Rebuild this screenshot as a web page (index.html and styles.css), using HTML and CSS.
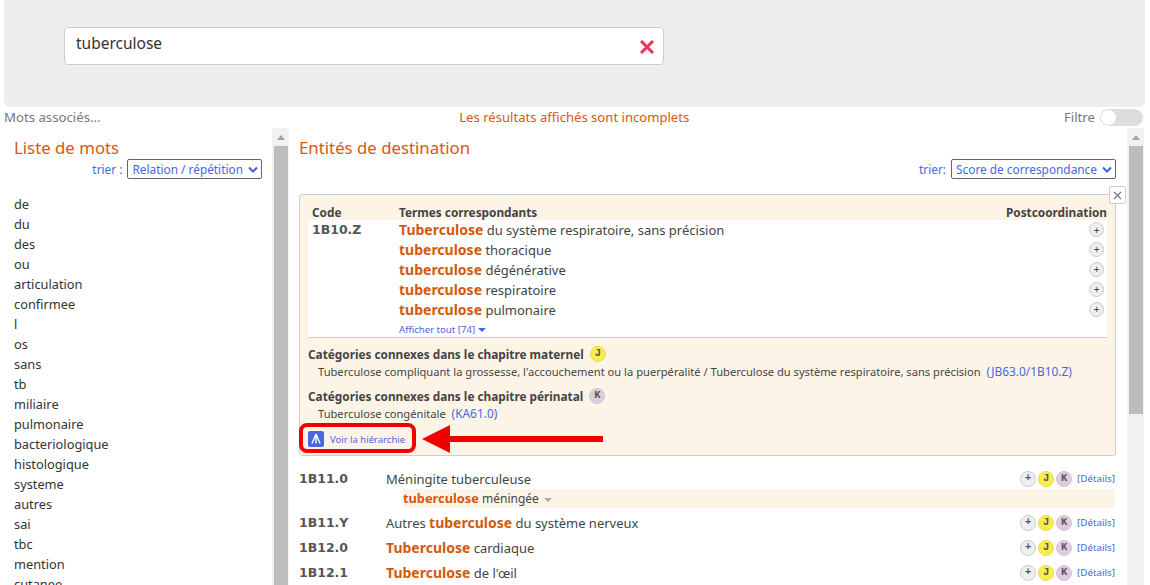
FILE: index.html
```html
<!DOCTYPE html>
<html lang="fr">
<head>
  <meta charset="UTF-8">
  <title>Recherche - tuberculose</title>
  <link rel="stylesheet" href="styles.css">
</head>
<body>
  <div class="search-band">
    <div class="search-box">
      <span class="search-text">tuberculose</span>
      <svg class="search-clear" width="16" height="14" viewBox="0 0 16 14"><path d="M2 1l12 12M14 1L2 13" stroke="#f0325f" stroke-width="3" fill="none"/></svg>
    </div>
  </div>

  <div class="status-row">
    <span class="status-left">Mots associés...</span>
    <span class="status-mid">Les résultats affichés sont incomplets</span>
    <span class="status-right">Filtre <span class="toggle"><span class="toggle-knob"></span></span></span>
  </div>

  <div class="panes">
    <div class="word-pane">
      <h2 class="pane-title">Liste de mots</h2>
      <div class="sort-row">
        <span>trier :</span>
        <span class="sort-select">Relation / répétition <svg width="10" height="7" viewBox="0 0 10 7"><path d="M1 1.5l4 4 4-4" stroke="#3f5fe0" stroke-width="2" fill="none"/></svg></span>
      </div>
      <ul class="word-list">
        <li>de</li><li>du</li><li>des</li><li>ou</li><li>articulation</li><li>confirmee</li><li>l</li><li>os</li><li>sans</li><li>tb</li><li>miliaire</li><li>pulmonaire</li><li>bacteriologique</li><li>histologique</li><li>systeme</li><li>autres</li><li>sai</li><li>tbc</li><li>mention</li><li>cutanee</li>
      </ul>
    </div>
    <div class="scrollbar">
      <span class="scroll-up"></span>
      <span class="scroll-thumb thumb-long"></span>
    </div>

    <div class="results-pane">
      <h2 class="pane-title">Entités de destination</h2>
      <div class="sort-row">
        <span>trier:</span>
        <span class="sort-select">Score de correspondance <svg width="10" height="7" viewBox="0 0 10 7"><path d="M1 1.5l4 4 4-4" stroke="#3f5fe0" stroke-width="2" fill="none"/></svg></span>
      </div>

      <div class="card">
        <span class="card-close">
          <svg width="9" height="9" viewBox="0 0 9 9"><path d="M1 1l7 7M8 1L1 8" stroke="#777" stroke-width="1.2" fill="none"/></svg>
        </span>
        <div class="card-head">
          <span class="col-code">Code</span>
          <span class="col-terms">Termes correspondants</span>
          <span class="col-post">Postcoordination</span>
        </div>
        <div class="card-table">
          <div class="term-row">
            <span class="col-code code">1B10.Z</span>
            <span class="col-terms"><b>Tuberculose</b> du système respiratoire, sans précision</span>
            <span class="plus">+</span>
          </div>
          <div class="term-row">
            <span class="col-code"></span>
            <span class="col-terms"><b>tuberculose</b> thoracique</span>
            <span class="plus">+</span>
          </div>
          <div class="term-row">
            <span class="col-code"></span>
            <span class="col-terms"><b>tuberculose</b> dégénérative</span>
            <span class="plus">+</span>
          </div>
          <div class="term-row">
            <span class="col-code"></span>
            <span class="col-terms"><b>tuberculose</b> respiratoire</span>
            <span class="plus">+</span>
          </div>
          <div class="term-row">
            <span class="col-code"></span>
            <span class="col-terms"><b>tuberculose</b> pulmonaire</span>
            <span class="plus">+</span>
          </div>
          <div class="show-all">Afficher tout [74] <i class="caret"></i></div>
        </div>

        <div class="related">
          <div class="related-title">Catégories connexes dans le chapitre maternel <span class="chip chip-j">J</span></div>
          <div class="related-line">Tuberculose compliquant la grossesse, l'accouchement ou la puerpéralité / Tuberculose du système respiratoire, sans précision <a>(JB63.0/1B10.Z)</a></div>
        </div>
        <div class="related">
          <div class="related-title">Catégories connexes dans le chapitre périnatal <span class="chip chip-k">K</span></div>
          <div class="related-line">Tuberculose congénitale <a>(KA61.0)</a></div>
        </div>

        <div class="hierarchy">
          <span class="hierarchy-icon">
            <svg width="16" height="16" viewBox="0 0 16 16"><path d="M8 3L4 12.5M8 3l4 9.5M8 5v7.5" stroke="#fff" stroke-width="1.4" fill="none"/></svg>
          </span>
          Voir la hiérarchie
        </div>
        <span class="hierarchy-ring"></span>
        <svg class="hierarchy-arrow" width="181" height="28" viewBox="0 0 181 28"><path d="M0 14L28 0v11H181v6H28v11z" fill="#f20000"/></svg>
      </div>

      <div class="result">
        <span class="result-code code">1B11.0</span>
        <span class="result-title">Méningite tuberculeuse</span>
        <span class="chips"><span class="chip chip-plus">+</span><span class="chip chip-j">J</span><span class="chip chip-k">K</span></span>
        <a class="details">[Détails]</a>
      </div>
      <div class="result-sub"><b>tuberculose</b> méningée <i class="caret caret-grey"></i></div>
      <div class="result">
        <span class="result-code code">1B11.Y</span>
        <span class="result-title">Autres <b>tuberculose</b> du système nerveux</span>
        <span class="chips"><span class="chip chip-plus">+</span><span class="chip chip-j">J</span><span class="chip chip-k">K</span></span>
        <a class="details">[Détails]</a>
      </div>
      <div class="result">
        <span class="result-code code">1B12.0</span>
        <span class="result-title"><b>Tuberculose</b> cardiaque</span>
        <span class="chips"><span class="chip chip-plus">+</span><span class="chip chip-j">J</span><span class="chip chip-k">K</span></span>
        <a class="details">[Détails]</a>
      </div>
      <div class="result">
        <span class="result-code code">1B12.1</span>
        <span class="result-title"><b>Tuberculose</b> de l'œil</span>
        <span class="chips"><span class="chip chip-plus">+</span><span class="chip chip-j">J</span><span class="chip chip-k">K</span></span>
        <a class="details">[Détails]</a>
      </div>
    </div>
    <div class="scrollbar">
      <span class="scroll-up"></span>
      <span class="scroll-thumb thumb-short"></span>
    </div>
  </div>
</body>
</html>
```

FILE: styles.css
```css
html, body {
  height: 585px;
  overflow: hidden;
}

body {
  margin: 0;
  padding: 0 5px 0 4px;
  box-sizing: border-box;
  width: 1150px;
  font-family: "Noto Sans", sans-serif;
  font-size: 13px;
  color: #444;
  background: #fff;
}

a {
  color: #4a66e0;
}

b {
  font-size: 14px;
}

/* top band */
.search-band {
  height: 107px;
  box-sizing: border-box;
  padding: 27px 0 0 60px;
  background: #eeeeee;
  border-radius: 0 0 6px 6px;
}

.search-box {
  width: 600px;
  height: 38px;
  box-sizing: border-box;
  display: flex;
  justify-content: space-between;
  align-items: center;
  padding: 0 8px 0 11px;
  background: #fff;
  border: 1px solid #ccc;
  border-radius: 4px;
}

.search-text {
  font-size: 15.5px;
  color: #333;
  margin-top: -7px;
}

.search-clear {
  margin-top: 1px;
}

.status-row {
  height: 21px;
  padding: 0 2px 2px 0;
  box-sizing: border-box;
  display: flex;
  align-items: center;
  justify-content: space-between;
  font-size: 13.2px;
  color: #777;
}

.status-mid {
  font-size: 13.1px;
  color: #d9560f;
  margin-right: 16px;
}

.status-right {
  display: flex;
  align-items: center;
  gap: 5px;
}

.toggle {
  width: 43px;
  height: 17px;
  margin-top: 2px;
  display: block;
  background: #ddd;
  border-radius: 9px;
}

.toggle-knob {
  width: 15px;
  height: 15px;
  margin: 1px;
  display: block;
  background: #fff;
  border-radius: 50%;
}

/* panes */
.panes {
  display: flex;
  height: 457px;
}

.word-pane {
  width: 248px;
  padding: 0 10px;
  flex: none;
  overflow: hidden;
}

.scrollbar {
  width: 17px;
  flex: none;
  display: flex;
  flex-direction: column;
  align-items: center;
  background: #f1f1f1;
}

.scroll-up {
  width: 0;
  height: 0;
  margin: 7px 0 6px;
  border: 4px solid transparent;
  border-top: 0;
  border-bottom: 5px solid #a3a3a3;
}

.scroll-thumb {
  width: 14px;
  background: #bdbdbd;
}

.thumb-long {
  flex: 1;
}

.thumb-short {
  height: 268px;
}

.pane-title {
  margin: 9px 0 0;
  font-size: 16.8px;
  line-height: 22px;
  font-weight: 400;
  color: #d9560f;
}

.sort-row {
  display: flex;
  justify-content: flex-end;
  align-items: center;
  gap: 5px;
  height: 20px;
  font-size: 11.85px;
  color: #4a66e0;
}

.sort-select {
  height: 20px;
  box-sizing: border-box;
  display: flex;
  align-items: center;
  gap: 5px;
  padding: 0 3px 0 4px;
  background: #fff;
  border: 1px solid #666;
  border-radius: 2px;
}

.word-list {
  list-style: none;
  margin: 15px 0 0;
  padding: 0;
  font-size: 12.8px;
  color: #333;
}

.word-list li {
  height: 20px;
  line-height: 20px;
}

.results-pane {
  width: 817px;
  margin: 0 11px 0 10px;
  flex: none;
}

/* highlighted card */
.card {
  position: relative;
  height: 262px;
  box-sizing: border-box;
  margin-top: 15px;
  padding: 8px 8px 0;
  background: #fdf4e8;
  border: 1px solid #ccc;
  border-radius: 3px;
}

.card b {
  color: #d4590b;
}

.card-close {
  position: absolute;
  top: -9px;
  right: -11px;
  width: 15px;
  height: 16px;
  display: flex;
  align-items: center;
  justify-content: center;
  background: #fff;
  border: 1px solid #ccc;
  border-radius: 2px;
}

.card-head {
  display: flex;
  height: 17px;
  align-items: center;
  font-size: 11.8px;
  font-weight: 700;
  color: #444;
}

.col-code {
  width: 91px;
  padding-left: 4px;
  box-sizing: border-box;
  flex: none;
}

.col-terms {
  flex: 1;
}

.card-table {
  height: 118px;
  box-sizing: border-box;
  background: #fff;
  border-bottom: 1px solid #ccc;
}

.term-row {
  display: flex;
  align-items: center;
  height: 20px;
  padding-right: 3px;
}

.term-row:first-child {
  height: 19px;
}

.code {
  font-family: "DejaVu Sans", sans-serif;
  font-weight: 700;
  font-size: 12.5px;
  color: #555;
}

.plus {
  width: 13px;
  height: 13px;
  flex: none;
  display: flex;
  align-items: center;
  justify-content: center;
  font-size: 10px;
  line-height: 1;
  color: #5b2d6e;
  background: #eee;
  border: 1px solid #ccc;
  border-radius: 50%;
}

.show-all {
  padding-left: 91px;
  height: 18px;
  line-height: 22px;
  font-size: 9.6px;
  color: #4a66e0;
}

.caret {
  display: inline-block;
  width: 0;
  height: 0;
  border: 4px solid transparent;
  border-bottom: 0;
  border-top: 4px solid #4a66e0;
  vertical-align: 1px;
}

.caret-grey {
  border-top-color: #aaa;
  margin-left: 2px;
}

.related {
  padding-top: 7px;
  height: 43px;
}

.related + .related {
  margin-top: -8px;
}

.related-title {
  display: flex;
  align-items: center;
  gap: 6px;
  height: 17px;
  font-size: 11.8px;
  font-weight: 700;
  color: #444;
}

.related-line {
  padding: 1px 0 0 10px;
  height: 17px;
  line-height: 17px;
  font-size: 11.15px;
  white-space: nowrap;
}

.related-line a {
  font-size: 11.9px;
  margin-left: 3px;
}

.chip {
  width: 16px;
  height: 16px;
  box-sizing: border-box;
  display: inline-flex;
  align-items: center;
  justify-content: center;
  font-family: "Liberation Mono", monospace;
  font-size: 10.5px;
  font-weight: 700;
  line-height: 1;
  color: #555;
  border-radius: 50%;
}

.chip-j {
  background: #f7ec50;
  border: 1px solid #eedd44;
}

.chip-k {
  background: #e0cce0;
  border: 1px solid #d6c2d8;
}

.chip-plus {
  background: #eee;
  border: 1px solid #ccc;
}

.hierarchy {
  display: flex;
  align-items: center;
  gap: 6px;
  margin-top: -1px;
  height: 20px;
  font-size: 9.5px;
  color: #4a66e0;
}

.hierarchy-icon {
  width: 16px;
  height: 16px;
  display: block;
  background: #4a66e0;
  border-radius: 2px;
}

/* red annotation over the card */
.hierarchy-ring {
  position: absolute;
  left: -1px;
  top: 228px;
  width: 117px;
  height: 30px;
  box-sizing: border-box;
  border: 4px solid #f20000;
  border-radius: 8px;
}

.hierarchy-arrow {
  position: absolute;
  left: 122px;
  top: 230px;
}

/* result rows */
.result {
  display: flex;
  align-items: center;
  height: 25px;
}

.card + .result {
  margin-top: 10px;
}

.result b {
  color: #d4590b;
}

.result-code {
  width: 87px;
  flex: none;
}

.result-title {
  flex: 1;
}

.chips {
  display: flex;
  gap: 2px;
  margin-right: 5px;
}

.details {
  font-size: 9.8px;
  margin-right: 1px;
}

.result-sub {
  height: 19px;
  line-height: 19px;
  margin: -2px 1px 2px 104px;
  font-size: 12px;
  background: #fdf4e8;
}

.result-sub b {
  font-size: 12.8px;
  color: #d4590b;
}
```
